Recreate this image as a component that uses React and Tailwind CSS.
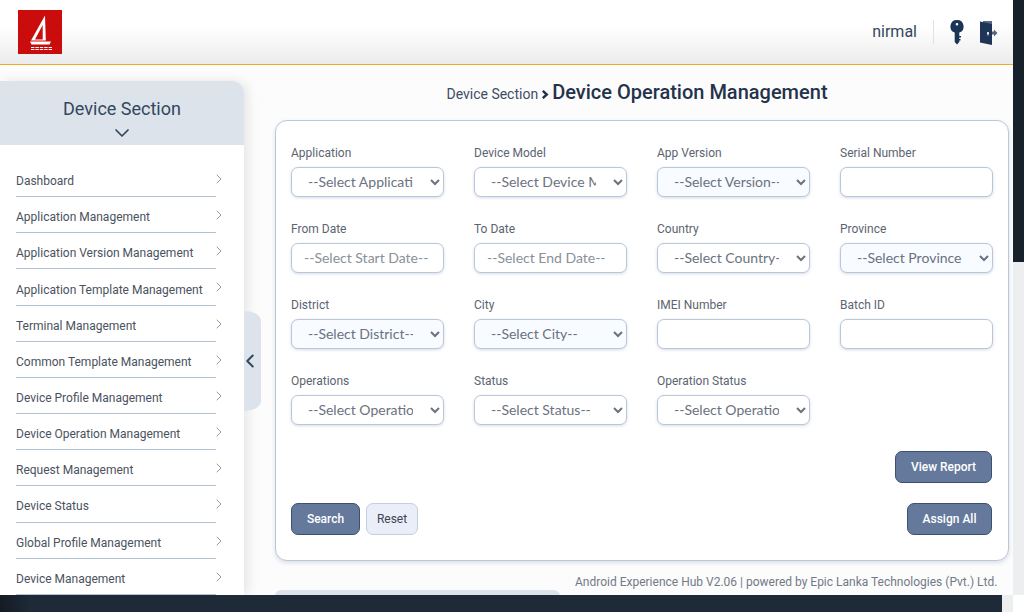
import React from 'react';
import { FiChevronRight, FiChevronDown, FiChevronLeft } from 'react-icons/fi';

const menu = [
  'Dashboard',
  'Application Management',
  'Application Version Management',
  'Application Template Management',
  'Terminal Management',
  'Common Template Management',
  'Device Profile Management',
  'Device Operation Management',
  'Request Management',
  'Device Status',
  'Global Profile Management',
  'Device Management',
];

const rows = [
  [
    { label: 'Application', type: 'select', text: '--Select Application--' },
    { label: 'Device Model', type: 'select', text: '--Select Device Model--' },
    { label: 'App Version', type: 'select', text: '--Select Version--', tint: true },
    { label: 'Serial Number', type: 'input' },
  ],
  [
    { label: 'From Date', type: 'input', placeholder: '--Select Start Date--' },
    { label: 'To Date', type: 'input', placeholder: '--Select End Date--' },
    { label: 'Country', type: 'select', text: '--Select Country--' },
    { label: 'Province', type: 'select', text: '--Select Province--', tint: true },
  ],
  [
    { label: 'District', type: 'select', text: '--Select District--', tint: true },
    { label: 'City', type: 'select', text: '--Select City--', tint: true },
    { label: 'IMEI Number', type: 'input' },
    { label: 'Batch ID', type: 'input' },
  ],
  [
    { label: 'Operations', type: 'select', text: '--Select Operation--' },
    { label: 'Status', type: 'select', text: '--Select Status--' },
    { label: 'Operation Status', type: 'select', text: '--Select Operation Status--' },
  ],
];

const fieldClass =
  "w-full h-[30px] rounded-[7px] border border-[#b9c7dc] shadow-[0_1px_3px_rgba(90,110,140,0.25)] text-[14px] leading-[18px] pb-[2px] text-[#6b7280] font-['Lato',sans-serif]";

const Field = ({ field }) => (
  <div className="flex flex-col h-[62px]">
    <label className="text-[12px] leading-[14px] h-[21px] text-[#5c6470]">{field.label}</label>
    {field.type === 'select' ? (
      <select
        defaultValue={field.text}
        className={`${fieldClass} pl-[12px] pr-[14px] ${field.tint ? 'bg-[#f8fbff]' : 'bg-white'}`}
      >
        <option>{field.text}</option>
      </select>
    ) : (
      <input
        placeholder={field.placeholder}
        className={`${fieldClass} px-[12px] bg-white placeholder:text-[#8a9099]`}
      />
    )}
  </div>
);

const PrimaryButton = ({ children, className }) => (
  <button className={`h-[32px] rounded-[7px] bg-[#64799b] border border-[#3c5070] text-white text-[12px] font-medium ${className}`}>
    {children}
  </button>
);

const Logo = () => (
  <svg width="44" height="44" viewBox="0 0 44 44">
    <rect width="44" height="44" fill="#cb0c0c" />
    <path d="M27 5.5 L13 30.5 L27.8 30.5 Z M24.7 15 L17 29.5 L24.7 29.5 Z" fill="#fff" fillRule="evenodd" />
    <path d="M12 31.5 H33 L31.5 34.5 H13.5 Z" fill="#fff" />
    <path d="M13 37.5 H34 M13 39.5 H34" stroke="#fff" strokeWidth="1.1" strokeDasharray="3.4 1" />
  </svg>
);

const KeyIcon = () => (
  <svg width="14" height="25" viewBox="0 0 14 25">
    <path
      d="M7 0 A6.5 6.5 0 0 1 9.3 12.6 V22 L7 24.5 L4.7 22 V12.6 A6.5 6.5 0 0 1 7 0 Z M7 3 A1.3 1.3 0 1 0 7 5.6 A1.3 1.3 0 1 0 7 3 Z"
      fill="#1c3557"
      fillRule="evenodd"
    />
    <path d="M9 16 H11 V17.5 H9 Z M9 19 H10.5 V20.5 H9 Z" fill="#1c3557" />
  </svg>
);

const DoorIcon = () => (
  <svg width="18" height="25" viewBox="0 0 18 25">
    <path d="M3 1 H12 V22 H3 Z" fill="#5b6b85" />
    <path d="M0 1.5 L12 4 V25 L0 22.5 Z" fill="#1f3557" />
    <circle cx="8" cy="13" r="1.1" fill="#fff" />
    <rect x="7.5" y="13" width="1" height="2.5" fill="#fff" />
    <path d="M12 11.5 H14 V9.5 L17.5 13 L14 16.5 V14.5 H12 Z" fill="#56657d" />
  </svg>
);

export default function App() {
  return (
    <div className="relative w-[1024px] h-[612px] overflow-hidden bg-white font-['Roboto',sans-serif]">
      <div className="flex h-[595px]">
        <div className="w-[1013px] bg-[#fcfcfc] flex flex-col overflow-hidden">
          {/* Header */}
          <header className="h-[65px] shrink-0 border-b border-[#f5a623] bg-gradient-to-b from-white from-40% to-[#ececec] flex items-center justify-between pl-[18px] pr-[15px]">
            <Logo />
            <div className="flex items-center">
              <span className="text-[16px] text-[#33475f] mr-[16px]">nirmal</span>
              <div className="w-px h-[24px] bg-[#dfe1e4] mr-[16px]"></div>
              <div className="mr-[16px]"><KeyIcon /></div>
              <DoorIcon />
            </div>
          </header>

          <div className="flex flex-1 min-h-0 pt-[16px]">
            {/* Sidebar */}
            <aside className="relative w-[244px] shrink-0 bg-white rounded-tr-xl shadow-[4px_0_12px_rgba(0,0,0,0.09)]">
              <div className="h-[64px] bg-[#dde3ea] rounded-tr-xl flex flex-col items-center pt-[16px]">
                <div className="text-[18px] leading-[24px] text-[#33475f]">Device Section</div>
                <FiChevronDown size={24} strokeWidth={1.7} className="shrink-0 text-[#33475f]" />
              </div>
              <ul className="pl-[16px] pt-[16px] w-[222px]">
                {menu.map((item) => (
                  <li key={item} className="relative h-[36.17px] w-[200px] pt-[5px] border-b border-[#b3c1d4] flex items-center text-[12px] text-[#4a5260]">
                    {item}
                    <FiChevronRight size={16} strokeWidth={1.2} className="absolute left-[195px] top-[10px] text-[#7a828e]" />
                  </li>
                ))}
              </ul>
              {/* collapse tab */}
              <div className="absolute left-full top-[230px] w-[17px] h-[100px] bg-[#dde3ea] rounded-tr-[16px_10px] rounded-br-[16px_10px] flex items-center">
                <FiChevronLeft size={22} strokeWidth={2.2} className="shrink-0 -ml-[5px] text-[#33475f]" />
              </div>
            </aside>

            {/* Content */}
            <main className="flex-1 min-w-0 flex flex-col pl-[31px] pr-[4px]">
              <div className="h-[39px] pr-[10px] flex items-baseline justify-center">
                <span className="text-[14px] leading-[22px] text-[#3f4d63]">Device Section</span>
                <svg width="8" height="9" viewBox="0 0 8 9" className="ml-[3px] mr-[3px]">
                  <path d="M1.8 0.8 L5.8 4.5 L1.8 8.2" fill="none" stroke="#25324b" strokeWidth="2.4" />
                </svg>
                <span className="text-[20px] leading-[22px] font-medium text-[#25324b]">Device Operation Management</span>
              </div>

              <section className="h-[441px] shrink-0 rounded-xl border border-[#b9c7dc] bg-white shadow-[0_2px_4px_rgba(90,110,140,0.2)] px-[15px] pt-[25px]">
                <div className="flex flex-col gap-[14px]">
                  {rows.map((row, i) => (
                    <div key={i} className="grid grid-cols-[153px_153px_153px_153px] gap-x-[30px]">
                      {row.map((field) => (
                        <Field key={field.label} field={field} />
                      ))}
                    </div>
                  ))}
                </div>
                <div className="flex justify-end mt-[15px] pr-[1px]">
                  <PrimaryButton className="w-[97px]">View Report</PrimaryButton>
                </div>
                <div className="flex items-center mt-[20px] pr-[1px]">
                  <PrimaryButton className="w-[69px]">Search</PrimaryButton>
                  <button className="ml-[6px] w-[52px] h-[32px] rounded-[7px] bg-[#e9eef8] border border-[#c3cede] text-[12px] text-[#3d4654]">Reset</button>
                  <PrimaryButton className="w-[85px] ml-auto">Assign All</PrimaryButton>
                </div>
              </section>

              <div className="relative flex-1 mt-[11px]">
                <div className="absolute left-0 top-[18px] w-[285px] h-[20px] bg-[#dde3ea] rounded-t-md"></div>
                <div className="absolute right-[-4px] top-0 w-[453px] h-[30px] bg-[#fcfcfc] text-[12px] text-[#727a86] leading-[20px] pl-[15px]">
                  Android Experience Hub V2.06 | powered by Epic Lanka Technologies (Pvt.) Ltd.
                </div>
              </div>
            </main>
          </div>
        </div>

        {/* Right strip */}
        <div className="w-[11px] flex flex-col">
          <div className="h-[262px] bg-[#17212c]"></div>
          <div className="flex-1 bg-[#eceef0]"></div>
        </div>
      </div>
      {/* Bottom bar */}
      <div className="flex h-[17px]">
        <div className="w-[1002px] bg-gradient-to-r from-[#141b24] via-[#1e2a38] via-3% to-[#1e2a38]"></div>
        <div className="w-[11px] bg-[#eceef0]"></div>
      </div>
    </div>
  );
}
